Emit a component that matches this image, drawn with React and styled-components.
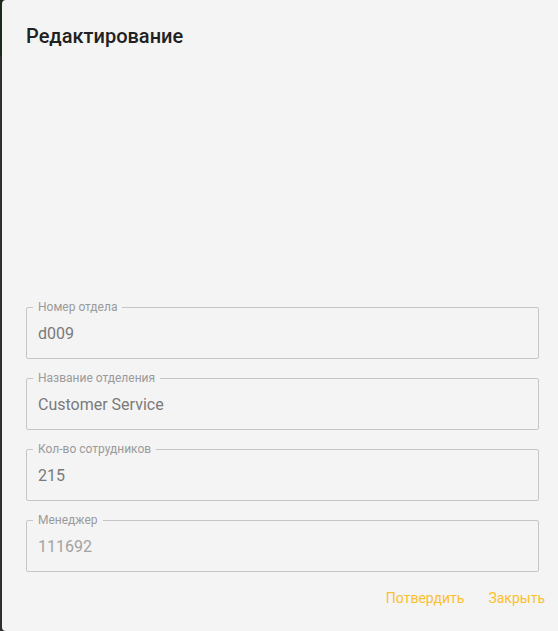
import React from "react";
import styled, { createGlobalStyle } from "styled-components";

const Global = createGlobalStyle`
  html, body {
    margin: 0;
    padding: 0;
    overflow: hidden;
    background: linear-gradient(#1d2a1d 0 56px, #2f2f2f 56px);
    font-family: Roboto, "Noto Sans", Arial, sans-serif;
  }
`;

const Stage = styled.div`
  height: 631px;
  padding-left: 2px;
  display: flex;
`;

const Dialog = styled.div`
  width: 560px;
  flex: none;
  height: 631px;
  background: #f4f4f4;
  border-radius: 4px;
  display: flex;
  flex-direction: column;
  box-sizing: border-box;
`;

const Title = styled.h2`
  margin: 0;
  padding: 20px 24px 0;
  font-size: 20px;
  font-weight: 500;
  line-height: 32px;
  color: #212121;
`;

const Content = styled.div`
  flex: 1;
  display: flex;
  flex-direction: column;
  justify-content: flex-end;
  gap: 12px;
  padding: 0 23px 0 24px;
`;

const Field = styled.fieldset`
  margin: 0;
  padding: 0 12px 0 11px;
  border: 1px solid #c6c6c6;
  border-radius: 2px;
  min-width: 0;
`;

const Legend = styled.legend`
  margin-left: -5px;
  padding: 0 5px;
  font-size: 12px;
  line-height: 14px;
  color: #9a9a9a;
`;

const Value = styled.div`
  padding: 10px 0 15px;
  font-size: 16px;
  line-height: 19px;
  color: ${(p) => (p.$muted ? "#a2a2a2" : "#7a7a7a")};
`;

const Actions = styled.div`
  display: flex;
  justify-content: flex-end;
  gap: 8px;
  padding: 8px 9px 15px;
`;

const Button = styled.button`
  border: none;
  background: transparent;
  padding: 0 8px;
  height: 36px;
  font-family: Roboto, "Noto Sans", Arial, sans-serif;
  font-size: 14px;
  color: #fbc02d;
  cursor: pointer;
`;

const fields = [
  { label: "Номер отдела", value: "d009" },
  { label: "Название отделения", value: "Customer Service" },
  { label: "Кол-во сотрудников", value: "215" },
  { label: "Менеджер", value: "111692", muted: true },
];

export default function App() {
  return (
    <>
      <Global />
      <Stage>
        <Dialog>
          <Title>Редактирование</Title>
          <Content>
            {fields.map((f) => (
              <Field key={f.label}>
                <Legend>{f.label}</Legend>
                <Value $muted={f.muted}>{f.value}</Value>
              </Field>
            ))}
          </Content>
          <Actions>
            <Button>Потвердить</Button>
            <Button>Закрыть</Button>
          </Actions>
        </Dialog>
      </Stage>
    </>
  );
}
